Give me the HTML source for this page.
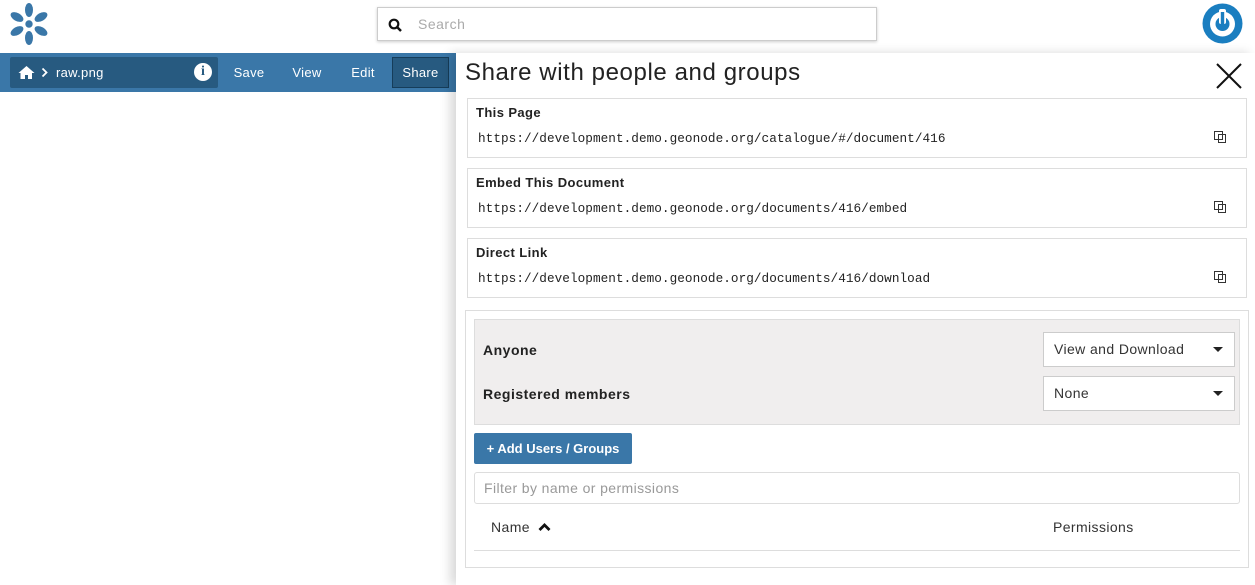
<!DOCTYPE html>
<html><head><meta charset="utf-8"><style>
*{box-sizing:border-box;margin:0;padding:0}
body{width:1255px;height:585px;overflow:hidden;background:#fff;font-family:"Liberation Sans",sans-serif;position:relative;color:#222}
.abs{position:absolute}
.search{left:377px;top:7px;width:500px;height:34px;border:1px solid #ccc;box-shadow:0 1px 3px rgba(0,0,0,.2);background:#fff}
.bar{left:0;top:53px;width:456px;height:39px;background:#3a77a8}
.crumb{left:10px;top:57px;width:208px;height:31px;background:#275a80;border-radius:2px;color:#fff;font-size:13px}
.btn{top:57px;height:31px;color:#fff;font-size:13px;line-height:31px;text-align:center;letter-spacing:.3px}
.panel{left:456px;top:53px;width:799px;height:532px;background:#fff;box-shadow:-6px 0 10px rgba(0,0,0,.15)}
.card{position:absolute;left:467px;width:780px;height:60px;border:1px solid #ddd;background:#fff}
.card b{position:absolute;left:8px;top:6px;font-size:13px;letter-spacing:.4px}
.card span{position:absolute;left:10px;top:32px;font-family:"Liberation Mono",monospace;font-size:12.7px;letter-spacing:.05px}
.copy{position:absolute;right:20px;top:35px;width:8px;height:9px;border:1px solid #333}
.copy:after{content:"";position:absolute;left:-5px;top:-4px;width:7px;height:7px;border:1px solid #333;background:transparent}
.sel{position:absolute;left:1043px;width:192px;height:35px;border:1px solid #ccc;background:#fff;font-size:14px;line-height:33px;padding-left:10px;color:#333;letter-spacing:.4px}
.sel:after{content:"";position:absolute;right:11px;top:14px;border:5px solid transparent;border-top:5px solid #222}
.lbl{font-size:14px;font-weight:bold;letter-spacing:.5px}
</style></head><body>
<svg class="abs" style="left:8px;top:2px" width="42" height="44" viewBox="0 0 42 44" fill="#3a77a8">
<circle cx="21" cy="22" r="3.7"/>
<ellipse cx="21" cy="8" rx="4" ry="7"/><ellipse cx="21" cy="36" rx="4" ry="7"/>
<ellipse cx="9" cy="15" rx="4" ry="7" transform="rotate(-60 9 15)"/><ellipse cx="33" cy="15" rx="4" ry="7" transform="rotate(60 33 15)"/>
<ellipse cx="9" cy="29" rx="4" ry="7" transform="rotate(60 9 29)"/><ellipse cx="33" cy="29" rx="4" ry="7" transform="rotate(-60 33 29)"/>
</svg>
<div class="abs search"><svg class="abs" style="left:10px;top:10px" width="14" height="14" viewBox="0 0 14 14"><circle cx="6" cy="6" r="4.3" fill="none" stroke="#111" stroke-width="2.2"/><path d="M9 9l4 4" stroke="#111" stroke-width="2.5"/></svg><span class="abs" style="left:40px;top:8px;color:#aaa;font-size:14px;letter-spacing:.5px">Search</span></div>
<svg class="abs" style="left:1202px;top:3px" width="41" height="41" viewBox="0 0 41 41"><circle cx="20.5" cy="20.5" r="20" fill="#1a7ec0"/><circle cx="20.5" cy="21" r="12.5" fill="#fff"/><circle cx="20.5" cy="21" r="7" fill="#1a7ec0"/><rect x="17" y="6" width="7" height="15" rx="2" fill="#fff"/><rect x="18.8" y="9" width="3.4" height="12" fill="#1a7ec0"/></svg>
<div class="abs bar"></div>
<div class="abs crumb"><svg class="abs" style="left:8px;top:8px" width="17" height="14" viewBox="0 0 17 14" fill="#fff"><path d="M8.5 1L0.5 8h2v6h4.5V10h3v4H14V8h2.5z"/></svg><svg class="abs" style="left:31px;top:10px" width="7" height="11" viewBox="0 0 7 11"><path d="M1.5 1.5l4 4-4 4" stroke="#fff" stroke-width="1.8" fill="none"/></svg><span class="abs" style="left:46px;top:8px;letter-spacing:.3px">raw.png</span><div class="abs" style="left:184px;top:6px;width:18px;height:18px;border-radius:50%;background:#fff;color:#275a80;font-weight:bold;font-size:14px;line-height:18px;text-align:center;font-family:'Liberation Serif',serif">i</div></div>
<div class="abs btn" style="left:226px;width:46px">Save</div>
<div class="abs btn" style="left:284px;width:46px">View</div>
<div class="abs btn" style="left:340px;width:46px">Edit</div>
<div class="abs btn" style="left:392px;width:57px;background:#275a80;border:1px solid #163d5a;line-height:29px">Share</div>
<div class="abs panel"></div>
<div class="abs" style="left:465px;top:59px;font-size:24px;letter-spacing:.6px;color:#222">Share with people and groups</div>
<svg class="abs" style="left:1216px;top:63px" width="26" height="26" viewBox="0 0 26 26"><path d="M1 1L25 25M25 1L1 25" stroke="#111" stroke-width="2"/></svg>
<div class="card" style="top:98px"><b>This Page</b><span>https://development.demo.geonode.org/catalogue/#/document/416</span><i class="copy"></i></div>
<div class="card" style="top:168px"><b>Embed This Document</b><span>https://development.demo.geonode.org/documents/416/embed</span><i class="copy"></i></div>
<div class="card" style="top:238px"><b>Direct Link</b><span>https://development.demo.geonode.org/documents/416/download</span><i class="copy"></i></div>
<div class="abs" style="left:465px;top:310px;width:784px;height:258px;border:1px solid #ddd"></div>
<div class="abs" style="left:474px;top:319px;width:766px;height:106px;background:#f0eeee;border:1px solid #ddd"></div>
<div class="abs lbl" style="left:483px;top:342px">Anyone</div>
<div class="abs lbl" style="left:483px;top:386px">Registered members</div>
<div class="sel" style="top:332px">View and Download</div>
<div class="sel" style="top:376px">None</div>
<div class="abs" style="left:474px;top:433px;width:158px;height:31px;background:#3a77a8;border-radius:2px;color:#fff;font-weight:bold;font-size:13px;line-height:31px;text-align:center">+ Add Users / Groups</div>
<div class="abs" style="left:474px;top:472px;width:766px;height:32px;border:1px solid #ddd;border-radius:3px;color:#999;font-size:14px;line-height:30px;padding-left:9px;letter-spacing:.4px">Filter by name or permissions</div>
<div class="abs" style="left:491px;top:519px;font-size:14px;color:#333;letter-spacing:.4px">Name</div>
<svg class="abs" style="left:538px;top:522px" width="13" height="10" viewBox="0 0 13 10"><path d="M1.5 8l5-5 5 5" stroke="#111" stroke-width="2.8" fill="none"/></svg>
<div class="abs" style="left:1053px;top:519px;font-size:14px;color:#333;letter-spacing:.4px">Permissions</div>
<div class="abs" style="left:474px;top:550px;width:766px;height:1px;background:#ddd"></div>
</body></html>
